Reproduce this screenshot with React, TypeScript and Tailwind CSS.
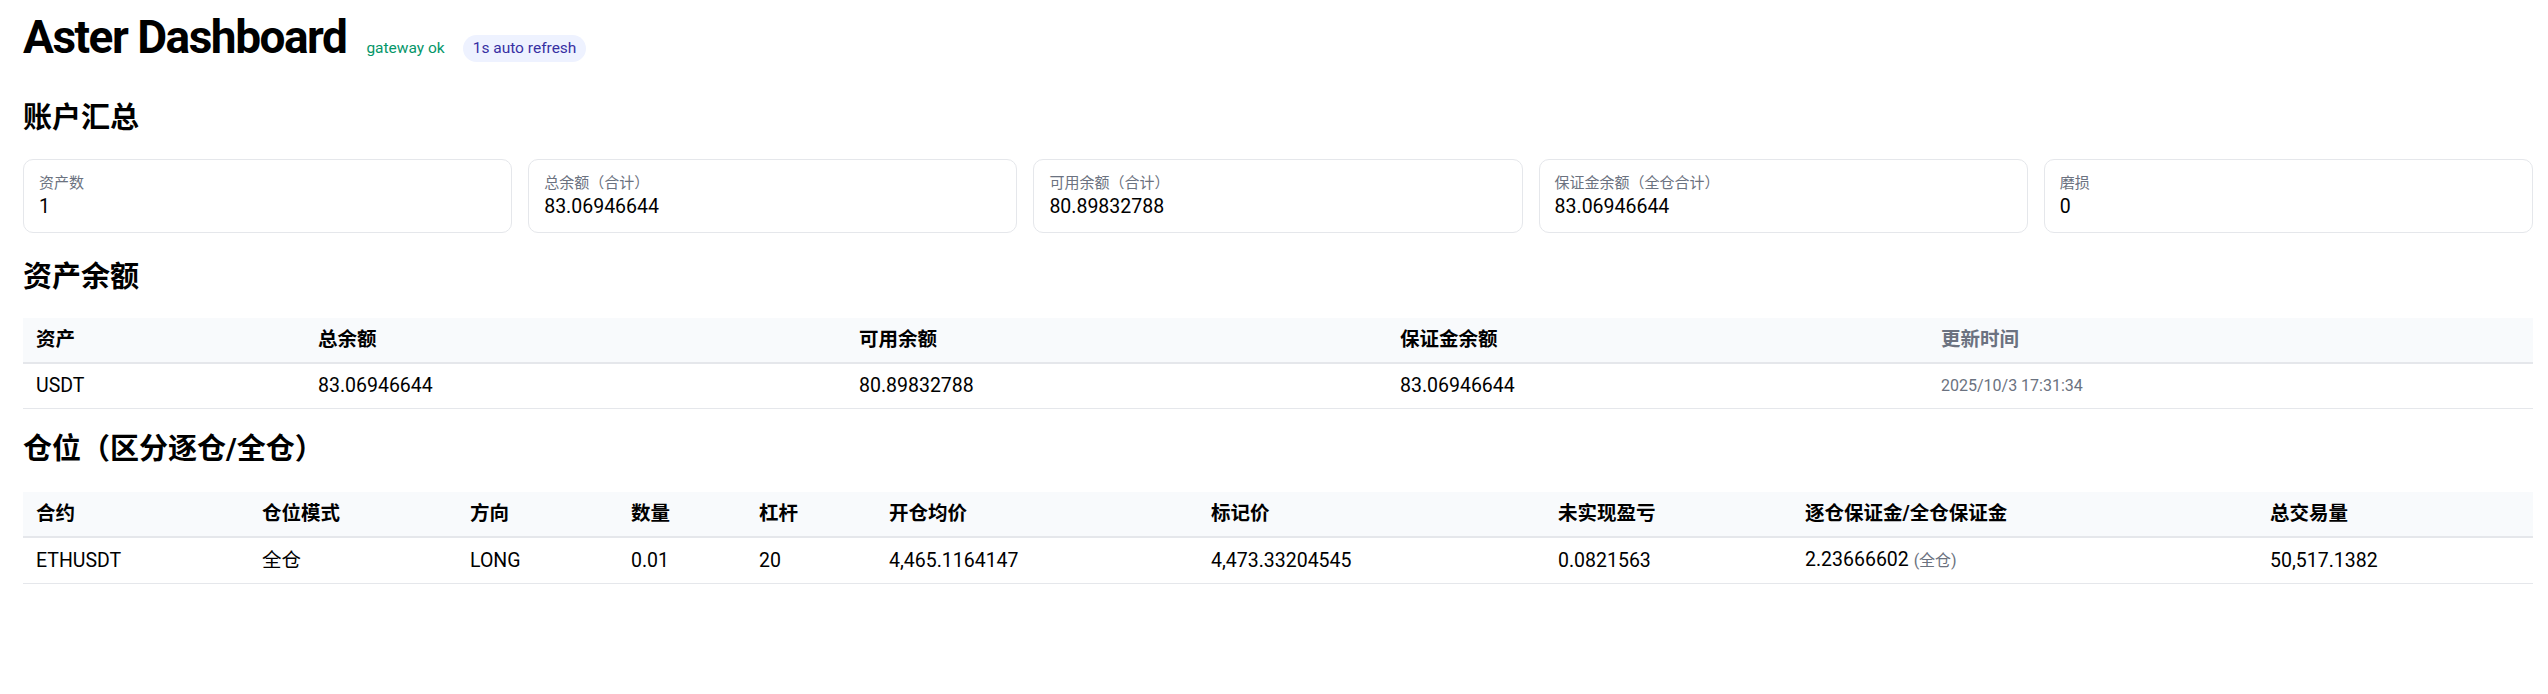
const font = { fontFamily: 'Roboto, "Noto Sans CJK SC", sans-serif' };

type Card = { label: string; value: string };

const cards: Card[] = [
  { label: "资产数", value: "1" },
  { label: "总余额（合计）", value: "83.06946644" },
  { label: "可用余额（合计）", value: "80.89832788" },
  { label: "保证金余额（全仓合计）", value: "83.06946644" },
  { label: "磨损", value: "0" },
];

const th = "py-[12px] px-[13px] text-left font-bold leading-[20px]";
const td = "py-[12px] px-[13px] text-left leading-[20px]";

function SectionTitle({ children, className }: { children: React.ReactNode; className: string }) {
  return <h2 className={`text-[29px] font-bold leading-[36px] text-black ${className}`}>{children}</h2>;
}

export default function App() {
  return (
    <div className="min-h-screen bg-white pl-[23px] pr-[15px] pt-[7px] text-black" style={font}>
      {/* header */}
      <div className="flex items-baseline">
        <h1 className="text-[46px] font-bold leading-[61px] tracking-[-1.5px]">Aster Dashboard</h1>
        <span className="ml-[20px] text-[15.5px] text-[#059669]">gateway ok</span>
        <span className="ml-[18px] rounded-full bg-[#eef2ff] px-[10px] py-[2px] text-[15.5px] text-[#3730a3]">
          1s auto refresh
        </span>
      </div>

      <SectionTitle className="mt-[32px]">账户汇总</SectionTitle>
      <div className="mt-[23px] grid grid-cols-5 gap-[16px]">
        {cards.map((c) => (
          <div key={c.label} className="rounded-[10px] border border-[#e5e7eb] px-[15px] py-[13px]">
            <div className="text-[15px] leading-[20px] text-[#6b7280]">{c.label}</div>
            <div className="mt-[2px] text-[19.5px] leading-[24px]">{c.value}</div>
          </div>
        ))}
      </div>

      <SectionTitle className="mt-[26px]">资产余额</SectionTitle>
      <table className="mt-[23px] w-full table-fixed border-collapse text-[19.5px]">
        <thead>
          <tr className="border-b-2 border-[#e5e7eb] bg-[#f8fafc]">
            <th className={`${th} w-[282px]`}>资产</th>
            <th className={`${th} w-[541px]`}>总余额</th>
            <th className={`${th} w-[541px]`}>可用余额</th>
            <th className={`${th} w-[541px]`}>保证金余额</th>
            <th className={`${th} text-[#6b7280]`}>更新时间</th>
          </tr>
        </thead>
        <tbody>
          <tr className="border-b border-[#e5e7eb]">
            <td className={td}>USDT</td>
            <td className={td}>83.06946644</td>
            <td className={td}>80.89832788</td>
            <td className={td}>83.06946644</td>
            <td className={`${td} text-[16px] text-[#6b7280]`}>2025/10/3 17:31:34</td>
          </tr>
        </tbody>
      </table>

      <SectionTitle className="mt-[22px]">仓位（区分逐仓/全仓）</SectionTitle>
      <table className="mt-[25px] w-full table-fixed border-collapse text-[19.5px]">
        <thead>
          <tr className="border-b-2 border-[#e5e7eb] bg-[#f8fafc]">
            <th className={`${th} w-[226px]`}>合约</th>
            <th className={`${th} w-[208px]`}>仓位模式</th>
            <th className={`${th} w-[161px]`}>方向</th>
            <th className={`${th} w-[128px]`}>数量</th>
            <th className={`${th} w-[130px]`}>杠杆</th>
            <th className={`${th} w-[322px]`}>开仓均价</th>
            <th className={`${th} w-[347px]`}>标记价</th>
            <th className={`${th} w-[247px]`}>未实现盈亏</th>
            <th className={`${th} w-[465px]`}>逐仓保证金/全仓保证金</th>
            <th className={th}>总交易量</th>
          </tr>
        </thead>
        <tbody>
          <tr className="border-b border-[#e5e7eb]">
            <td className={td}>ETHUSDT</td>
            <td className={td}>全仓</td>
            <td className={td}>LONG</td>
            <td className={td}>0.01</td>
            <td className={td}>20</td>
            <td className={td}>4,465.1164147</td>
            <td className={td}>4,473.33204545</td>
            <td className={td}>0.0821563</td>
            <td className={td}>
              2.23666602 <span className="text-[16px] text-[#6b7280]">(全仓)</span>
            </td>
            <td className={td}>50,517.1382</td>
          </tr>
        </tbody>
      </table>
    </div>
  );
}
